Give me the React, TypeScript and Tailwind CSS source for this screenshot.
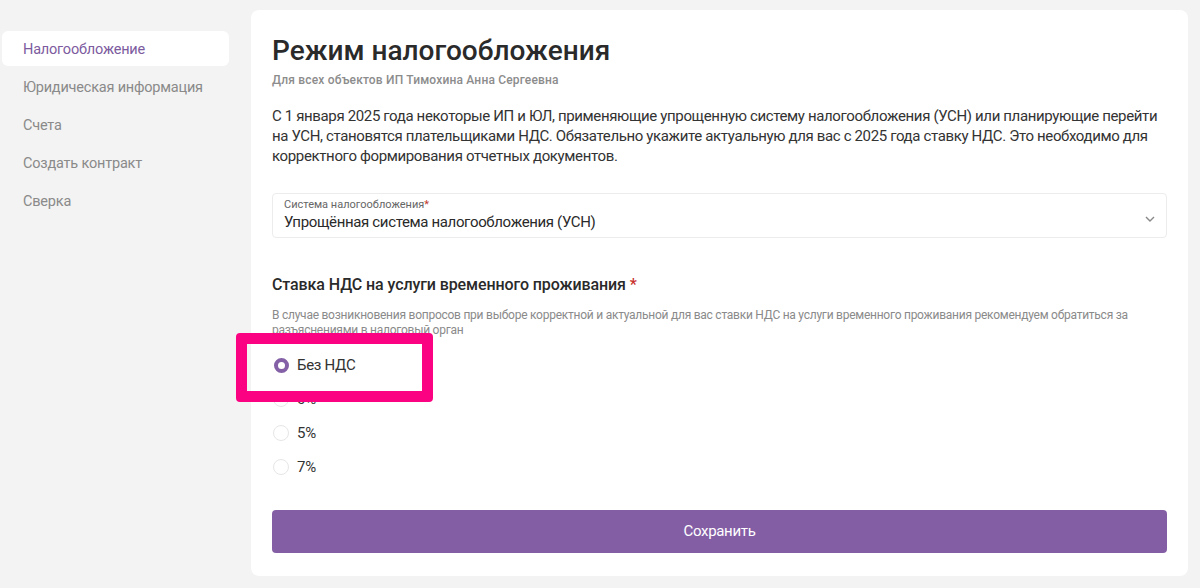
import { useState } from "react";

const navItems = ["Налогообложение", "Юридическая информация", "Счета", "Создать контракт", "Сверка"];
const rates = ["Без НДС", "0%", "5%", "7%"];

function Radio({ checked }: { checked: boolean }) {
    if (checked) {
        return <span className="w-[15px] h-[15px] rounded-full border-[4px] border-[#8460a6] bg-white" />;
    }
    return <span className="w-[16px] h-[16px] rounded-full border border-[#e6e6e6] bg-white" />;
}

export default function App() {
    const [rate, setRate] = useState("Без НДС");

    return (
        <div className="flex h-[588px] w-[1200px] bg-[#f3f3f3] overflow-hidden font-['Roboto',sans-serif]">
            {/* sidebar */}
            <nav className="w-[251px] shrink-0 pt-[31px] pl-[2px] pr-[22px] flex flex-col gap-[3px]">
                {navItems.map((item, i) => (
                    <div
                        key={item}
                        className={`h-[35px] flex items-center pt-[2px] px-[21px] rounded-md text-[14.5px] tracking-[-0.2px] whitespace-nowrap ${i === 0 ? "bg-white text-[#7c5b9e]" : "text-[#8a8a8a]"}`}
                    >
                        {item}
                    </div>
                ))}
            </nav>

            {/* card */}
            <div className="relative mt-[10px] w-[937px] h-[566px] bg-white rounded-lg px-[21px] pt-[23px] flex flex-col">
                <h1 className="text-[28px] leading-[36px] font-medium text-[#2a2a2a]">Режим налогообложения</h1>
                <p className="mt-[3px] text-[12px] leading-[16px] font-medium text-[#8c8c8c] tracking-[0.18px]">Для всех объектов ИП Тимохина Анна Сергеевна</p>
                <p className="mt-[18px] text-[15px] leading-[20px] text-[#333] whitespace-nowrap tracking-[-0.36px]">
                    С 1 января 2025 года некоторые ИП и ЮЛ, применяющие упрощенную систему налогообложения (УСН) или планирующие перейти<br />
                    на УСН, становятся плательщиками НДС. Обязательно укажите актуальную для вас с 2025 года ставку НДС. Это необходимо для<br />
                    корректного формирования отчетных документов.
                </p>

                <div className="mt-[27px] w-[895px] h-[45px] border border-[#ececec] rounded-[4px] px-[11px] pt-[4px] flex items-start justify-between">
                    <div className="flex flex-col">
                        <span className="text-[11px] leading-[13px] text-[#666]">Система налогообложения<span className="text-[#c0392b]">*</span></span>
                        <span className="text-[15px] leading-[22px] text-[#2a2a2a] tracking-[-0.35px]">Упрощённая система налогообложения (УСН)</span>
                    </div>
                    <svg className="mt-[17px] mr-[-1px]" width="12" height="8" viewBox="0 0 12 8" fill="none">
                        <polyline points="2,2 6,6 10,2" stroke="#888" strokeWidth="1.4" />
                    </svg>
                </div>

                <h2 className="mt-[35px] text-[16px] leading-[24px] font-medium text-[#2a2a2a] whitespace-nowrap tracking-[-0.1px]">
                    Ставка НДС на услуги временного проживания <span className="text-[#c8312b]">*</span>
                </h2>
                <p className="mt-[11px] text-[12px] leading-[15px] text-[#8a8a8a] whitespace-nowrap tracking-[-0.25px]">
                    В случае возникновения вопросов при выборе корректной и актуальной для вас ставки НДС на услуги временного проживания рекомендуем обратиться за<br />
                    разъяснениями в налоговый орган
                </p>

                <div className="mt-[10px] flex flex-col">
                    {rates.map((r) => (
                        <label key={r} onClick={() => setRate(r)} className="h-[34px] flex items-center gap-[8px] pl-[1px] cursor-pointer">
                            <span className="w-[16px] flex items-center justify-center">
                                <Radio checked={rate === r} />
                            </span>
                            <span className="text-[15px] text-[#333] tracking-[-0.3px]">{r}</span>
                        </label>
                    ))}
                </div>

                <button className="mt-[26px] w-[895px] h-[43px] shrink-0 rounded-[4px] bg-[#845ea5] text-white text-[15px] tracking-[-0.3px]">
                    Сохранить
                </button>

                {/* highlight frame */}
                <div className="absolute left-[-15px] top-[323px] w-[197px] h-[69px] border-[11px] border-[#fa0281] rounded-[4px] pointer-events-none" />
            </div>
        </div>
    );
}
